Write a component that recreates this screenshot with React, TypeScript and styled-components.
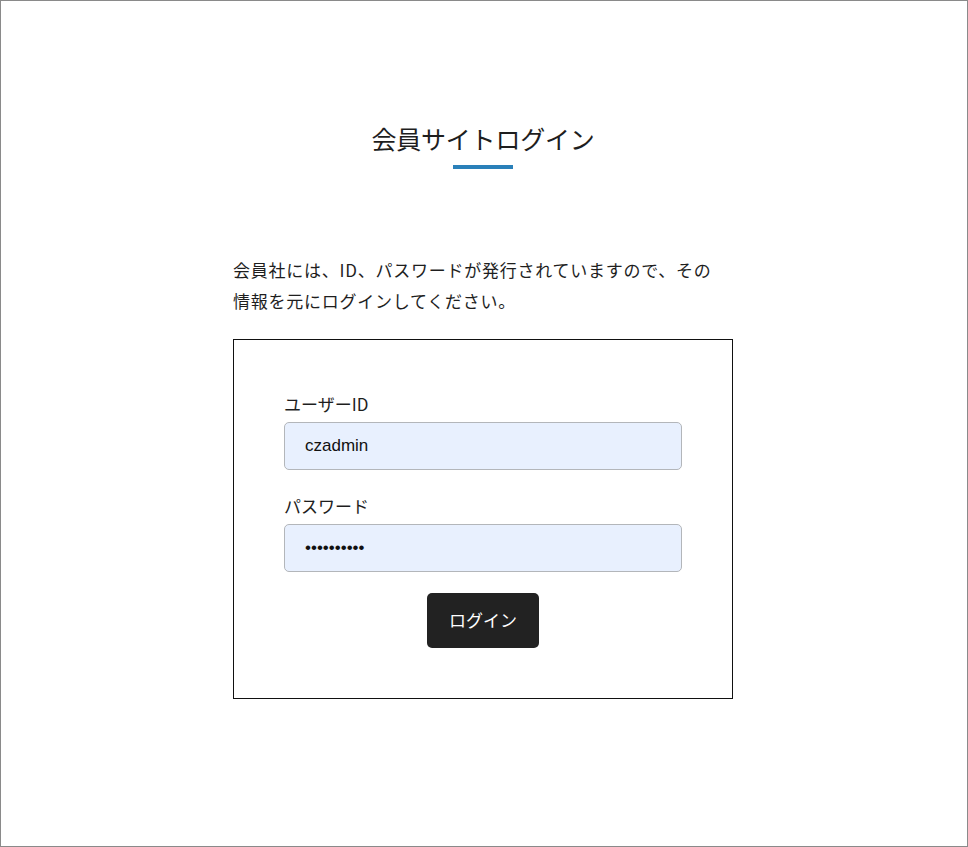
import React from 'react';
import styled, { createGlobalStyle } from 'styled-components';

const GlobalStyle = createGlobalStyle`
  html, body {
    margin: 0;
    padding: 0;
    background: #ffffff;
  }
  body {
    font-family: "Noto Sans CJK JP", "Noto Sans", sans-serif;
    color: #222222;
  }
  * {
    box-sizing: border-box;
  }
`;

const Frame = styled.div`
  height: 100vh;
  border: 1px solid #8a8a8a;
  padding-right: 2px;
  display: flex;
  flex-direction: column;
  align-items: center;
`;

const Heading = styled.div`
  margin-top: 119px;
  display: flex;
  flex-direction: column;
  align-items: center;
`;

const Title = styled.h1`
  margin: 0;
  font-size: 25px;
  font-weight: 400;
  line-height: 37px;
  letter-spacing: -0.2px;
  color: #1e1e1e;
`;

const TitleBar = styled.span`
  display: block;
  width: 60px;
  height: 4px;
  margin-top: 8px;
  background: #2a80b9;
`;

const Lead = styled.p`
  width: 500px;
  margin: 85px 0 23px;
  font-size: 17px;
  line-height: 31px;
  letter-spacing: 0.75px;
  color: #1e1e1e;
`;

const LoginBox = styled.form`
  width: 500px;
  border: 1px solid #111111;
  padding: 51px 50px 50px;
  display: flex;
  flex-direction: column;
  gap: 23px;
`;

const Field = styled.div`
  display: flex;
  flex-direction: column;
`;

const FieldLabel = styled.label`
  font-size: 17px;
  line-height: 26px;
  margin-bottom: 5px;
  color: #1e1e1e;
`;

const TextInput = styled.input`
  width: 100%;
  height: 48px;
  border: 1px solid #b3b6ba;
  border-radius: 5px;
  background: #e8f0fe;
  padding: 0 20px;
  font-family: "Liberation Sans", Arial, sans-serif;
  font-size: 17px;
  color: #111111;
  outline: none;
`;

const SubmitButton = styled.button`
  align-self: center;
  margin-top: -2px;
  width: 112px;
  height: 55px;
  padding: 0 0 3px;
  border: none;
  border-radius: 5px;
  background: #222222;
  color: #ffffff;
  font-family: "Noto Sans CJK JP", "Noto Sans", sans-serif;
  font-size: 17px;
  cursor: pointer;
`;

const App = () => {
  return (
    <>
      <GlobalStyle />
      <Frame>
        <Heading>
          <Title>会員サイトログイン</Title>
          <TitleBar />
        </Heading>
        <Lead>
          会員社には、ID、パスワードが発行されていますので、その
          <br />
          情報を元にログインしてください。
        </Lead>
        <LoginBox onSubmit={(e) => e.preventDefault()}>
          <Field>
            <FieldLabel htmlFor='user-id'>ユーザーID</FieldLabel>
            <TextInput id='user-id' type='text' defaultValue='czadmin' />
          </Field>
          <Field>
            <FieldLabel htmlFor='password'>パスワード</FieldLabel>
            <TextInput id='password' type='password' defaultValue='czadmin123' />
          </Field>
          <SubmitButton type='submit'>ログイン</SubmitButton>
        </LoginBox>
      </Frame>
    </>
  );
};

export default App;
